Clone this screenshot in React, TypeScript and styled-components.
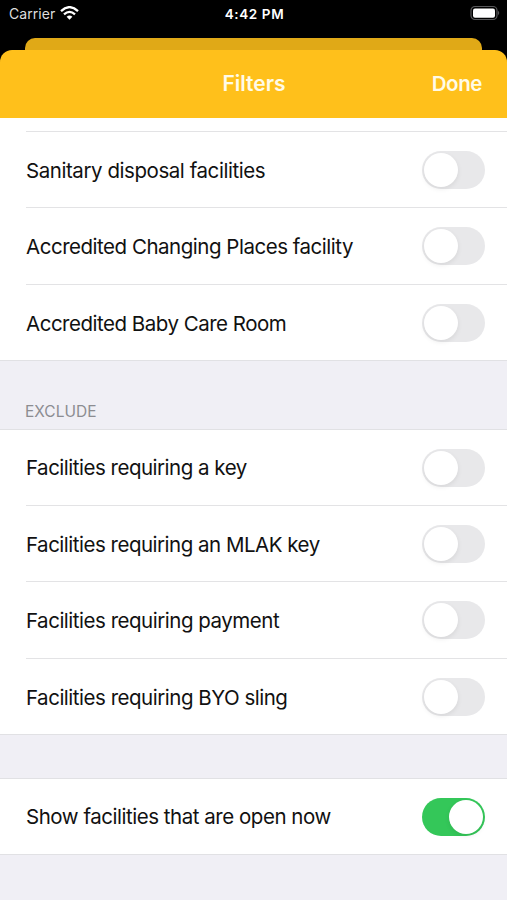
import React from 'react';
import styled, { createGlobalStyle } from 'styled-components';

const GlobalStyle = createGlobalStyle`
  * { box-sizing: border-box; }
  body {
    margin: 0;
    background: #000;
    font-family: Inter, "Liberation Sans", sans-serif;
    -webkit-font-smoothing: antialiased;
  }
`;

const Screen = styled.main`
  width: 507px;
  height: 900px;
  overflow: hidden;
  display: flex;
  flex-direction: column;
  background: #000;
`;

const StatusBar = styled.header`
  height: 38px;
  flex: none;
  display: grid;
  grid-template-columns: 1fr auto 1fr;
  align-items: start;
  padding: 5px 7px 0 9px;
  color: #fff;
  font-size: 14px;
  line-height: 18px;
`;

const Carrier = styled.div`
  display: flex;
  align-items: flex-start;
  gap: 5px;
  color: #dedede;
  letter-spacing: 0.05px;
  svg { margin-top: 1px; }
`;

const Clock = styled.time`
  font-weight: 600;
  font-size: 13.5px;
  letter-spacing: 0.6px;
`;

const Battery = styled.div`
  justify-self: end;
  height: 16px;
  display: flex;
`;

const BackCard = styled.div`
  flex: none;
  height: 12px;
  margin: 0 25px;
  border-radius: 10px 10px 0 0;
  background: #e0a917;
`;

const NavBar = styled.nav`
  flex: none;
  height: 68px;
  display: grid;
  grid-template-columns: 1fr auto 1fr;
  align-items: center;
  padding: 0 25px 0 26px;
  border-radius: 12px 12px 0 0;
  background: #ffc01b;
  color: #fffbe8;
`;

const Title = styled.h1`
  grid-column: 2;
  margin: 0;
  font-size: 21px;
  font-weight: 600;
  line-height: 24px;
`;

const DoneButton = styled.button`
  justify-self: end;
  padding: 0;
  border: 0;
  background: none;
  color: inherit;
  font: 600 20.5px/24px Inter, sans-serif;
  letter-spacing: -0.4px;
`;

const List = styled.div`
  flex: 1;
  background: #f0eff5;
`;

const Group = styled.section<{ $first?: boolean }>`
  background: #fff;
  border-bottom: 1px solid #e1e1e4;
  border-top: ${p => (p.$first ? '0' : '1px solid #e1e1e4')};
  padding-top: ${p => (p.$first ? '13px' : '0')};
`;

const Label = styled.span<{ $spacing: number }>`
  padding-top: 1px;
  font-size: 20.5px;
  line-height: 26px;
  letter-spacing: ${p => p.$spacing}px;
  color: #111;
  white-space: nowrap;
`;

const Row = styled.label<{ $ruled?: boolean; $height: number }>`
  height: ${p => p.$height}px;
  margin-left: 26px;
  padding-right: 22px;
  display: flex;
  align-items: center;
  justify-content: space-between;
  border-top: ${p => (p.$ruled ? '1px solid #e3e3e5' : '0')};

  ${Label} {
    padding-top: ${p => (p.$ruled ? 2 : 1)}px;
  }
`;

const Track = styled.span<{ $on?: boolean }>`
  flex: none;
  width: 63px;
  height: 38px;
  padding: 2px;
  display: flex;
  justify-content: ${p => (p.$on ? 'flex-end' : 'flex-start')};
  border-radius: 19px;
  background: ${p => (p.$on ? '#34c759' : '#e8e8ea')};
`;

const Knob = styled.span`
  width: 34px;
  height: 34px;
  border-radius: 50%;
  background: #fff;
  box-shadow: 0 2px 5px rgba(0, 0, 0, 0.08);
`;

const SectionTitle = styled.h2`
  height: 68px;
  margin: 0;
  padding: 40px 0 0 25px;
  color: #8c8c91;
  font-size: 15.5px;
  font-weight: 400;
  line-height: 21px;
`;

const Spacer = styled.div`
  height: 43px;
`;

type Option = { label: string; height: number; spacing: number; on?: boolean };

const include: Option[] = [
  { label: 'Sanitary disposal facilities', height: 76, spacing: -0.44 },
  { label: 'Accredited Changing Places facility', height: 77, spacing: -0.48 },
  { label: 'Accredited Baby Care Room', height: 76, spacing: -0.49 },
];

const exclude: Option[] = [
  { label: 'Facilities requiring a key', height: 75, spacing: -0.49 },
  { label: 'Facilities requiring an MLAK key', height: 76, spacing: -0.49 },
  { label: 'Facilities requiring payment', height: 77, spacing: -0.48 },
  { label: 'Facilities requiring BYO sling', height: 76, spacing: -0.48 },
];

const open: Option[] = [
  { label: 'Show facilities that are open now', height: 75, spacing: -0.47, on: true },
];

function OptionGroup({ options, first }: { options: Option[]; first?: boolean }) {
  return (
    <Group $first={first}>
      {options.map((o, i) => (
        <Row key={o.label} $height={o.height} $ruled={first || i > 0}>
          <Label $spacing={o.spacing}>{o.label}</Label>
          <Track role="switch" aria-checked={!!o.on} $on={o.on}>
            <Knob />
          </Track>
        </Row>
      ))}
    </Group>
  );
}

export default function App() {
  return (
    <Screen>
      <GlobalStyle />
      <StatusBar>
        <Carrier>
          Carrier
          <svg width="19" height="14" viewBox="0 0 19 14" fill="none" stroke="#fff" strokeWidth="2.3">
            <path d="M1 5.1Q9.5-2.8 18 5.1" />
            <path d="M4 8.4Q9.5 3.4 15 8.4" />
            <path d="M6.6 10.8Q9.5 8.2 12.4 10.8L9.5 13.7Z" fill="#fff" stroke="none" />
          </svg>
        </Carrier>
        <Clock>4:42 PM</Clock>
        <Battery>
          <svg width="30" height="16" viewBox="0 0 30 16">
            <rect x="1" y="1.5" width="26" height="13" rx="4" fill="none" stroke="#58585a" strokeWidth="1.2" />
            <rect x="3" y="3.5" width="22" height="9.3" rx="2" fill="#fff" />
            <path d="M28.2 5.8Q30.2 8 28.2 10.2Z" fill="#69696b" />
          </svg>
        </Battery>
      </StatusBar>
      <BackCard />
      <NavBar>
        <Title>Filters</Title>
        <DoneButton>Done</DoneButton>
      </NavBar>
      <List>
        <OptionGroup options={include} first />
        <SectionTitle>EXCLUDE</SectionTitle>
        <OptionGroup options={exclude} />
        <Spacer />
        <OptionGroup options={open} />
      </List>
    </Screen>
  );
}
